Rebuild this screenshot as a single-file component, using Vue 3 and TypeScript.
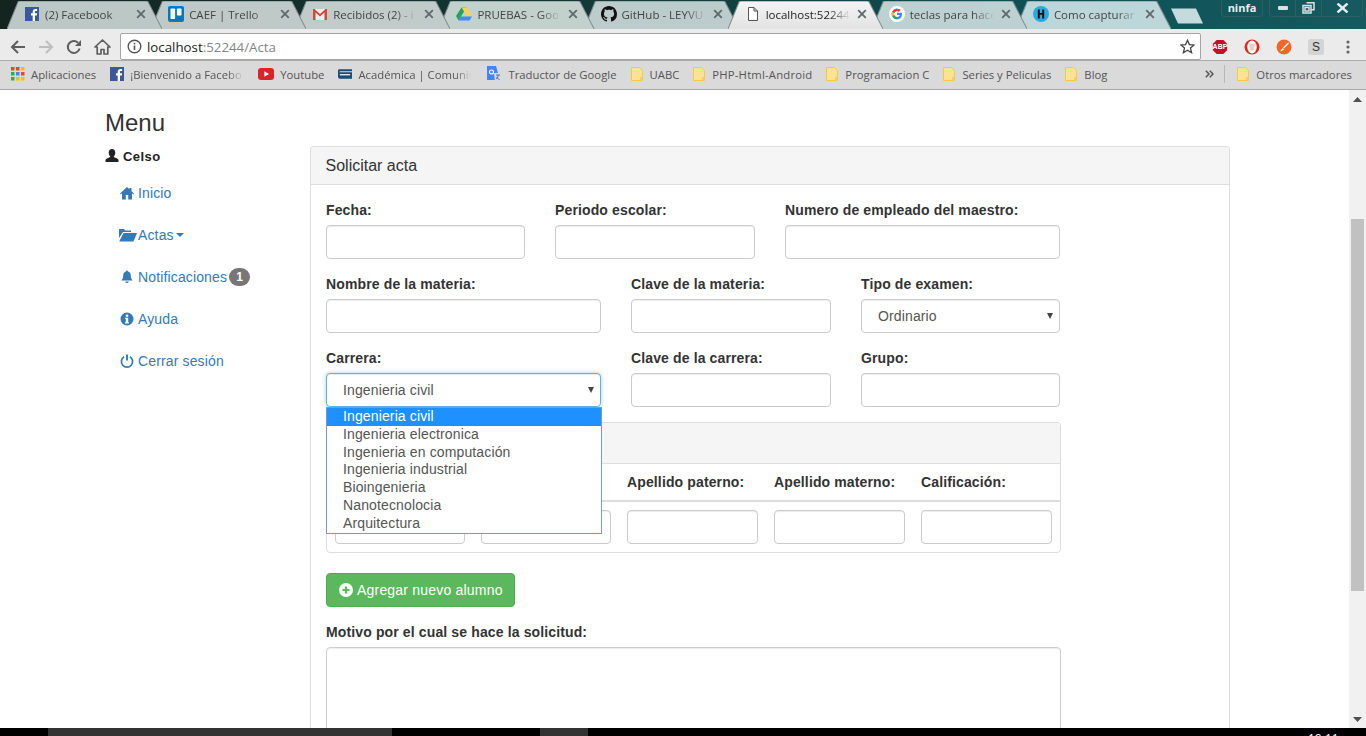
<script setup lang="ts">
interface Tab { title: string; icon: string; active?: boolean; fill: string }
const tabs: Tab[] = [
  { title: '(2) Facebook', icon: 'fb', fill: '#bcc8c6' },
  { title: 'CAEF | Trello', icon: 'trello', fill: '#bfcac8' },
  { title: 'Recibidos (2) - i', icon: 'gmail', fill: '#c1cbca' },
  { title: 'PRUEBAS - Goo', icon: 'drive', fill: '#c3d1cd' },
  { title: 'GitHub - LEYVU', icon: 'github', fill: '#bccbcb' },
  { title: 'localhost:52244', icon: 'doc', active: true, fill: 'url(#activeTab)' },
  { title: 'teclas para hace', icon: 'google', fill: '#bdd0d2' },
  { title: 'Como capturar', icon: 'hiren', fill: '#bdd6da' },
]
interface Mark { title: string; icon: string; fade?: boolean; wide?: boolean }
const marks: Mark[] = [
  { title: 'Aplicaciones', icon: 'apps' },
  { title: '¡Bienvenido a Facebo', icon: 'fb', fade: true },
  { title: 'Youtube', icon: 'yt' },
  { title: 'Académica | Comunid', icon: 'acad', fade: true },
  { title: 'Traductor de Google', icon: 'gt' },
  { title: 'UABC', icon: 'folder' },
  { title: 'PHP-Html-Android', icon: 'folder', wide: true },
  { title: 'Programacion C', icon: 'folder' },
  { title: 'Series y Peliculas', icon: 'folder' },
  { title: 'Blog', icon: 'folder' },
]
const nav = ['Inicio', 'Actas', 'Notificaciones', 'Ayuda', 'Cerrar sesión']
const carreras = ['Ingenieria civil', 'Ingenieria electronica', 'Ingenieria en computación', 'Ingenieria industrial', 'Bioingenieria', 'Nanotecnolocia', 'Arquitectura']
const cols = ['', '', 'Apellido paterno:', 'Apellido materno:', 'Calificación:']
</script>

<template>
  <div class="screen">
    <svg width="0" height="0" class="defs">
      <defs>
        <linearGradient id="activeTab" x1="0" y1="0" x2="0" y2="1">
          <stop offset="0" stop-color="#f4f4f4" />
          <stop offset="1" stop-color="#e3e3e3" />
        </linearGradient>
      </defs>
    </svg>

    <div class="tabstrip">
      <div class="tabs">
        <div v-for="(t, i) in tabs" :key="t.title" class="tab" :class="{ active: t.active }" :style="{ zIndex: t.active ? 20 : 10 - i }">
          <svg class="tab-bg" viewBox="0 0 155 28" preserveAspectRatio="none">
            <path d="M0 28 L11 1 Q11.5 0 13 0 L139 0 Q140.5 0 141 1 L155 28" :fill="t.fill" stroke="#7f8c8c" stroke-width="1" />
          </svg>
          <span class="fav">
            <svg v-if="t.icon === 'fb'" width="16" height="16" viewBox="0 0 16 16"><rect width="14" height="14" y="1" x="1" fill="#3b5998" /><path d="M11 15V9.5h1.800l.3-2.200H11V6c0-.6.2-1 1-1h1.100V3c-.2 0-.9-.1-1.600-.1-1.600 0-2.800 1-2.800 2.800v1.600H7v2.200h1.700V15z" fill="#fff" /></svg>
            <svg v-else-if="t.icon === 'trello'" width="16" height="16" viewBox="0 0 16 16"><rect width="16" height="16" rx="2" fill="#0079bf" /><rect x="2.500" y="2.500" width="4.600" height="10.500" rx=".8" fill="#fff" /><rect x="8.900" y="2.500" width="4.600" height="7" rx=".8" fill="#fff" /></svg>
            <svg v-else-if="t.icon === 'gmail'" width="16" height="16" viewBox="0 0 16 16"><path d="M1 3h14v11H1z" fill="#eee" /><path d="M1 14V3h1.500L8 8l5.500-5H15v11h-2.500V6.500L8 10.500 3.500 6.500V14z" fill="#d44638" /></svg>
            <svg v-else-if="t.icon === 'drive'" width="16" height="16" viewBox="0 0 16 16"><path d="M5.500 1.500h5L5 10.500 2.500 14.500 0 10z" fill="#1fa463" /><path d="M5.500 1.500h5L16 10h-5z" fill="#ffd04b" /><path d="M4.800 10.500H16l-2.500 4H2.500z" fill="#4688f4" /></svg>
            <svg v-else-if="t.icon === 'github'" width="16" height="16" viewBox="0 0 16 16"><path d="M8 0C3.580 0 0 3.580 0 8c0 3.540 2.290 6.530 5.470 7.590.4.070.55-.17.55-.38 0-.19-.01-.82-.01-1.490-2.010.37-2.530-.49-2.690-.94-.09-.23-.48-.94-.82-1.130-.28-.15-.68-.52-.01-.53.63-.01 1.080.58 1.230.82.720 1.210 1.870.870 2.330.660.070-.520.280-.870.510-1.070-1.780-.2-3.640-.890-3.640-3.950 0-.870.310-1.590.820-2.150-.080-.200-.360-1.020.080-2.120 0 0 .670-.210 2.200.820.640-.180 1.320-.270 2-.270s1.360.090 2 .270c1.530-1.040 2.200-.820 2.200-.820.440 1.100.160 1.920.080 2.120.510.560.820 1.270.820 2.150 0 3.070-1.870 3.750-3.650 3.950.290.250.540.730.540 1.480 0 1.070-.010 1.930-.010 2.200 0 .210.150.460.550.380A8.010 8.010 0 0 0 16 8c0-4.420-3.580-8-8-8z" fill="#111" /></svg>
            <svg v-else-if="t.icon === 'doc'" width="16" height="16" viewBox="0 0 16 16"><path d="M3.500 1.500h5.500l3.500 3.500v9.500h-9zM9 1.500V5h3.500" fill="#fff" stroke="#555" stroke-width="1" /></svg>
            <svg v-else-if="t.icon === 'google'" width="16" height="16" viewBox="0 0 16 16"><circle cx="8" cy="8" r="8" fill="#fff" /><path d="M12.800 6.800H8v2.200h2.800c-.3 1.300-1.400 2-2.800 2a3 3 0 1 1 1.900-5.300l1.600-1.600A5.300 5.300 0 1 0 8 13.300c2.900 0 5-2 5-5.100 0-.5 0-.9-.2-1.400z" fill="#4285f4" /><path d="M3.300 5.500 5.200 7A3 3 0 0 1 9.900 5.700l1.600-1.600a5.300 5.300 0 0 0-8.200 1.400z" fill="#ea4335" /><path d="M3.300 10.500 5.200 9A3 3 0 0 0 8 11v2.300a5.300 5.300 0 0 1-4.700-2.800z" fill="#34a853" /><path d="M2.800 8c0-.9.200-1.700.5-2.500L5.200 7a3 3 0 0 0 0 2l-1.900 1.500A5.300 5.300 0 0 1 2.800 8z" fill="#fbbc05" /></svg>
            <svg v-else-if="t.icon === 'hiren'" width="16" height="16" viewBox="0 0 16 16"><circle cx="8" cy="8" r="8" fill="#29abe2" /><path d="M4.800 3.500h2v3.500h2.400V3.500h2v9h-2V8.800H6.800v3.700h-2z" fill="#111" /></svg>
          </span>
          <span class="tab-title">{{ t.title }}</span>
          <svg class="tab-x" width="10" height="10" viewBox="0 0 10 10"><path d="M1.200 1.200 8.800 8.800M8.800 1.200 1.200 8.800" stroke="#5f6a6a" stroke-width="1.800" /></svg>
        </div>
        <svg class="newtab" width="33" height="16" viewBox="0 0 33 16"><path d="M0 .5h25L32 15.500H7z" fill="#c4dadd" /></svg>
      </div>
      <div class="winbtns">
        <div class="winbtn user">ninfa</div>
        <div class="winctl">
          <div class="w-min"><svg width="12" height="6" viewBox="0 0 12 6"><rect x="1" y="1" width="10" height="4" rx="1" fill="#d8e2e2" /></svg></div>
          <div class="w-max"><svg width="13" height="12" viewBox="0 0 13 12"><path d="M4.500 .8h7.500v7H9.500M1 3.500h8v7.500H1zM3 5.500h4V9H3z" fill="none" stroke="#d8e2e2" stroke-width="1.500" /></svg></div>
          <div class="w-close"><svg width="13" height="10" viewBox="0 0 13 10"><path d="M1.500 .5 11.500 9.500M11.500 .5 1.500 9.500" stroke="#e4ecec" stroke-width="2.400" /></svg></div>
        </div>
      </div>
    </div>

    <div class="toolbar">
      <div class="navbtns">
        <svg width="16" height="16" viewBox="0 0 16 16"><path d="M15 8H2.500M8 2 2 8l6 6" fill="none" stroke="#5e5e5e" stroke-width="2" /></svg>
        <svg width="16" height="16" viewBox="0 0 16 16"><path d="M1 8h12.500M8 2l6 6-6 6" fill="none" stroke="#bdbdbd" stroke-width="2" /></svg>
        <svg width="16" height="16" viewBox="0 0 16 16"><path d="M13.600 9.500A6 6 0 1 1 12 3.700" fill="none" stroke="#5e5e5e" stroke-width="2" /><path d="M15 1v6H9z" fill="#5e5e5e" /></svg>
        <svg width="17" height="16" viewBox="0 0 17 16"><path d="M8.500 1 1 8h2.200v7h3.800v-4.500h3V15h3.800V8H16z" fill="none" stroke="#5e5e5e" stroke-width="1.700" stroke-linejoin="round" /></svg>
      </div>
      <div class="omnibox">
        <svg width="15" height="15" viewBox="0 0 15 15"><circle cx="7.500" cy="7.500" r="6.300" fill="none" stroke="#555" stroke-width="1.400" /><rect x="6.700" y="6.500" width="1.600" height="4.500" fill="#555" /><rect x="6.700" y="3.800" width="1.600" height="1.600" fill="#555" /></svg>
        <span class="url"><span class="host">localhost</span>:52244/Acta</span>
        <svg class="star" width="15" height="15" viewBox="0 0 15 15"><path d="M7.500 1.300 9.400 5.600l4.700.4-3.600 3.100 1.100 4.600-4.100-2.500-4.100 2.500 1.100-4.600L.9 6l4.700-.4z" fill="none" stroke="#444" stroke-width="1.300" /></svg>
      </div>
      <div class="exts">
        <span class="abp">
          <svg width="16" height="16" viewBox="0 0 18 18"><path d="M5.300 1h7.400L17 5.300v7.400L12.700 17H5.300L1 12.700V5.300z" fill="#c70d2c" /></svg>
          <span class="abp-t">ABP</span>
        </span>
        <svg width="16" height="16" viewBox="0 0 17 17"><circle cx="8.500" cy="8.500" r="8" fill="#e02a20" /><ellipse cx="8.500" cy="8.500" rx="5" ry="6.800" fill="#fff" /><path d="M5.700 8V5h5.500v4l-1.200 3.500H7z" fill="#e02a20" opacity=".25" /></svg>
        <svg width="16" height="16" viewBox="0 0 16 16"><circle cx="8" cy="8" r="7.500" fill="#f4652a" /><path d="M12 3.500 7 8.500l1 1 5-5zM6.500 9 4 12.500l3.500-1.500 .5-.8z" fill="#fff" /></svg>
        <span class="ext-s">S</span>
        <svg class="dots" width="4" height="14" viewBox="0 0 4 14"><circle cx="2" cy="2" r="1.600" fill="#666" /><circle cx="2" cy="7" r="1.600" fill="#666" /><circle cx="2" cy="12" r="1.600" fill="#666" /></svg>
      </div>
    </div>

    <div class="bookmarks">
      <div class="marks">
        <div v-for="m in marks" :key="m.title" class="mark" :class="{ isfolder: m.icon === 'folder' }">
          <svg v-if="m.icon === 'apps'" width="14" height="14" viewBox="0 0 14 14">
            <rect x="0" y="0" width="3.500" height="3.500" fill="#ea4335" /><rect x="5" y="0" width="3.500" height="3.500" fill="#ea4335" /><rect x="10" y="0" width="3.500" height="3.500" fill="#fbbc05" />
            <rect x="0" y="5" width="3.500" height="3.500" fill="#34a853" /><rect x="5" y="5" width="3.500" height="3.500" fill="#4285f4" /><rect x="10" y="5" width="3.500" height="3.500" fill="#ea4335" />
            <rect x="0" y="10" width="3.500" height="3.500" fill="#34a853" /><rect x="5" y="10" width="3.500" height="3.500" fill="#fbbc05" /><rect x="10" y="10" width="3.500" height="3.500" fill="#fbbc05" />
          </svg>
          <svg v-else-if="m.icon === 'fb'" width="14" height="14" viewBox="0 0 14 14"><rect width="14" height="14" fill="#3b5998" /><path d="M10 14V8.500h1.800l.3-2.200H10V5c0-.6.2-1 1-1h1.100V2c-.2 0-.9-.1-1.600-.1-1.600 0-2.800 1-2.800 2.800v1.600H6v2.200h1.700V14z" fill="#fff" /></svg>
          <svg v-else-if="m.icon === 'yt'" width="16" height="12" viewBox="0 0 16 12"><rect width="16" height="12" rx="3" fill="#d9252a" /><path d="M6.300 3.200 11 6l-4.700 2.800z" fill="#fff" /></svg>
          <svg v-else-if="m.icon === 'acad'" width="14" height="10" viewBox="0 0 15 10"><path d="M1 0h14v2H3C2 2 1.500 2.500 1.500 3H15v7H2C.5 10 0 9 0 7.500V2C0 1 .3 0 1 0z" fill="#1c4b74" /><rect x="2" y="5" width="11" height="1.500" fill="#dfe6ec" /></svg>
          <svg v-else-if="m.icon === 'gt'" width="16" height="16" viewBox="0 0 16 16"><path d="M1 0h9l4 14H1z" fill="#4285f4" /><path d="M8 7h8v9H9z" fill="#d5d9e3" /><path d="M10 9h4M12 9v1c0 1.500-1 2.500-2 3M10.500 11c.5 1 1.500 2 3 2.500" stroke="#5b6d94" fill="none" /><circle cx="5.500" cy="6" r="2" fill="none" stroke="#fff" stroke-width="1.200" /></svg>
          <svg v-else width="12" height="14" viewBox="0 0 12 14"><path d="M.5.500h8l3 3v10H.5z" fill="#fde293" stroke="#f0c94f" /><path d="M9 10h2.500v3.500H9z" fill="#f4d064" /></svg>
          <span class="mark-t" :class="{ fade: m.fade, wide: m.wide }">{{ m.title }}</span>
        </div>
      </div>
      <div class="bm-right">
        <svg width="9" height="8" viewBox="0 0 9 8"><path d="M.8.800 4 4 .8 7.200M4.800.800 8 4 4.800 7.200" fill="none" stroke="#555" stroke-width="1.500" /></svg>
        <span class="bm-sep"></span>
        <div class="mark isfolder">
          <svg width="12" height="14" viewBox="0 0 12 14"><path d="M.5.500h8l3 3v10H.5z" fill="#fde293" stroke="#f0c94f" /><path d="M9 10h2.500v3.500H9z" fill="#f4d064" /></svg>
          <span class="mark-t">Otros marcadores</span>
        </div>
      </div>
    </div>

    <div class="viewport">
      <main class="page">
        <div class="container">
          <aside class="sidebar">
            <h3 class="menu-title">Menu</h3>
            <div class="user-row">
              <svg width="14" height="14" viewBox="0 0 14 14"><path d="M7 0c2 0 3.300 1.500 3.300 3.700 0 1.500-.6 2.800-1.500 3.600 0 .7.300 1 1 1.300 1.500.6 3.200 1.200 3.700 2.400V13H.5v-2c.5-1.200 2.200-1.800 3.700-2.400.7-.3 1-.6 1-1.300C4.300 6.500 3.700 5.200 3.700 3.700 3.700 1.500 5 0 7 0z" fill="#222" /></svg>
              <b>Celso</b>
            </div>
            <nav class="nav">
              <a v-for="(n, i) in nav" :key="n" class="nav-item">
                <svg v-if="i === 0" width="14" height="14" viewBox="0 0 14 14"><path d="M7 1 0 7.500l.8.800L2 7.300V13.500h3.800V9h2.400v4.500H12V7.300l1.200 1 .8-.8L11.500 5.200V2h-2v1.300z" fill="#337ab7" /></svg>
                <svg v-else-if="i === 1" width="18" height="14" viewBox="0 0 18 14" class="ic-folder"><path d="M0 3V1h5l1 1.500h6V4H4L0 10z" fill="#337ab7" /><path d="M4.500 5H18L14.500 13.500H.2z" fill="#337ab7" /></svg>
                <svg v-else-if="i === 2" width="14" height="14" viewBox="0 0 14 14"><path d="M6 1.500a1 1 0 0 1 2 0c2 .5 2.700 2 2.800 4 .1 2.500.7 3.800 1.900 5H1.300c1.200-1.200 1.800-2.500 1.900-5 .1-2 .8-3.500 2.800-4zM5.400 11.500h3.200a1.600 1.600 0 0 1-3.200 0z" fill="#337ab7" /></svg>
                <svg v-else-if="i === 3" width="14" height="14" viewBox="0 0 14 14"><circle cx="7" cy="7" r="6.500" fill="#337ab7" /><rect x="5.800" y="2.600" width="2.400" height="2.200" fill="#fff" /><path d="M5.200 5.800h3v4.400h.8v1.200H5v-1.200h.8V7H5.200z" fill="#fff" /></svg>
                <svg v-else width="14" height="14" viewBox="0 0 14 14"><path d="M4 2.800a5.600 5.600 0 1 0 6 0" fill="none" stroke="#337ab7" stroke-width="1.700" /><path d="M7 .5v6" stroke="#337ab7" stroke-width="1.900" /></svg>
                <span class="nav-t" :class="{ tight: i === 1 }">{{ n }}</span>
                <span v-if="i === 1" class="caret"></span>
                <span v-if="i === 2" class="badge">1</span>
              </a>
            </nav>
          </aside>

          <section class="panel">
            <header class="panel-head">Solicitar acta</header>
            <div class="panel-body">
              <div class="grid g1">
                <div class="field"><label>Fecha:</label><input class="ctl" /></div>
                <div class="field"><label>Periodo escolar:</label><input class="ctl" /></div>
                <div class="field"><label>Numero de empleado del maestro:</label><input class="ctl" /></div>
              </div>
              <div class="grid g2">
                <div class="field"><label>Nombre de la materia:</label><input class="ctl" /></div>
                <div class="field"><label>Clave de la materia:</label><input class="ctl" /></div>
                <div class="field">
                  <label>Tipo de examen:</label>
                  <div class="ctl sel"><span>Ordinario</span><i class="sel-arrow"></i></div>
                </div>
              </div>
              <div class="grid g2">
                <div class="field drop-host">
                  <label>Carrera:</label>
                  <div class="ctl sel focus"><span>Ingenieria civil</span><i class="sel-arrow"></i></div>
                  <ul class="dropdown">
                    <li v-for="(c, i) in carreras" :key="c" :class="{ on: i === 0 }">{{ c }}</li>
                  </ul>
                </div>
                <div class="field"><label>Clave de la carrera:</label><input class="ctl" /></div>
                <div class="field"><label>Grupo:</label><input class="ctl" /></div>
              </div>

              <div class="students">
                <div class="students-head"></div>
                <div class="st-row st-labels">
                  <b v-for="(c, i) in cols" :key="i">{{ c }}</b>
                </div>
                <div class="st-row st-inputs">
                  <input v-for="(c, i) in cols" :key="i" class="ctl" />
                </div>
              </div>

              <button class="btn-add" type="button">
                <svg width="14" height="14" viewBox="0 0 14 14"><circle cx="7" cy="7" r="7" fill="#fff" /><path d="M7 3.500v7M3.500 7h7" stroke="#5cb85c" stroke-width="2.200" /></svg>
                <span>Agregar nuevo alumno</span>
              </button>

              <div class="field motivo">
                <label>Motivo por el cual se hace la solicitud:</label>
                <textarea class="ctl area"></textarea>
              </div>
            </div>
          </section>
        </div>
      </main>
      <div class="scrollbar">
        <svg width="9" height="5" viewBox="0 0 9 5"><path d="M4.500 0 9 5H0z" fill="#505050" /></svg>
        <div class="thumb"></div>
        <svg class="arrow-down" width="9" height="5" viewBox="0 0 9 5"><path d="M0 0h9L4.500 5z" fill="#505050" /></svg>
      </div>
    </div>

    <div class="taskbar">
      <span class="task t1"></span>
      <span class="task t2"></span>
      <span class="clock">19:11</span>
      <span class="tray-line"></span>
    </div>
  </div>
</template>

<style scoped>
.screen {
  width: 1366px;
  height: 736px;
  overflow: hidden;
  display: flex;
  flex-direction: column;
  font-family: "Liberation Sans", Arial, sans-serif;
  font-size: 14px;
  color: #333;
  background: #fff;
}
.defs { position: absolute; }

.tabstrip {
  height: 29px;
  flex: none;
  display: flex;
  justify-content: space-between;
  background: linear-gradient(90deg, #14241f 0%, #123a38 45%, #0f5055 75%, #155a5e 100%);
  padding-left: 7px;
  padding-right: 3px;
}
.tabs { display: flex; padding-top: 1px; }
.tab {
  position: relative;
  width: 155.140px;
  height: 28px;
  margin-right: -11px;
  display: flex;
  align-items: center;
  padding-left: 17px;
  padding-right: 16px;
  padding-bottom: 2px;
  font-family: "Open Sans", "Noto Sans", sans-serif;
  font-size: 11.500px;
  color: #444;
  box-sizing: border-box;
  flex: none;
}
.tab.active { color: #222; }
.tab-bg { position: absolute; inset: 0; width: 100%; height: 100%; }
.fav, .tab-title, .tab-x { position: relative; }
.fav { width: 16px; height: 16px; display: flex; flex: none; }
.tab-title {
  margin-left: 5px;
  width: 84px;
  white-space: nowrap;
  overflow: hidden;
  flex: none;
  -webkit-mask-image: linear-gradient(90deg, #000 75%, transparent 100%);
  mask-image: linear-gradient(90deg, #000 75%, transparent 100%);
}
.tab-x { margin-left: 7px; flex: none; }
.newtab { margin-left: 11px; margin-top: 7px; flex: none; }

.winbtns { display: flex; gap: 6px; align-items: flex-start; }
.winbtn.user {
  width: 42px;
  height: 17px;
  box-sizing: border-box;
  border: 1px solid #2f5f62;
  border-top: 0;
  border-radius: 0 0 4px 4px;
  color: #e6eeee;
  font-family: "Open Sans", sans-serif;
  font-size: 11px;
  font-weight: 700;
  text-align: center;
  line-height: 16px;
}
.winctl {
  display: flex;
  height: 17px;
  border: 1px solid #2f5f62;
  border-top: 0;
  border-radius: 0 0 4px 4px;
  box-sizing: border-box;
}
.winctl > div { display: flex; align-items: center; justify-content: center; }
.w-min { width: 25px; border-right: 1px solid #2f5f62; }
.w-max { width: 25px; border-right: 1px solid #2f5f62; }
.w-close { width: 40px; }

.toolbar {
  height: 32px;
  flex: none;
  box-sizing: border-box;
  display: flex;
  align-items: flex-start;
  background: #ebebeb;
  border-bottom: 1px solid #ababab;
  padding-top: 4px;
  padding-left: 10px;
}
.navbtns { display: flex; gap: 12px; align-items: center; height: 27px; width: 110px; flex: none; }
.omnibox {
  width: 1081px;
  height: 27px;
  box-sizing: border-box;
  flex: none;
  background: #fff;
  border: 1px solid #a4a4a4;
  border-radius: 2px;
  display: flex;
  align-items: center;
  padding-left: 6px;
  padding-right: 5px;
  font-family: "Open Sans", "Noto Sans", sans-serif;
  font-size: 13.300px;
  color: #80868b;
}
.url { margin-left: 5px; flex: 1; padding-top: 1px; }
.host { color: #222; }
.exts {
  flex: 1;
  display: flex;
  align-items: center;
  height: 27px;
  padding-left: 11px;
  gap: 16px;
}
.abp { position: relative; width: 16px; height: 16px; display: flex; }
.abp-t {
  position: absolute;
  inset: 0;
  color: #fff;
  font: 700 7px/16px "Liberation Sans", sans-serif;
  text-align: center;
}
.ext-s {
  width: 16px;
  height: 16px;
  background: #d4d4d4;
  border-radius: 3px;
  text-align: center;
  font: 12px/16px "Liberation Sans", sans-serif;
  color: #333;
}
.dots { margin-left: 6px; }

.bookmarks {
  height: 29px;
  flex: none;
  box-sizing: border-box;
  display: flex;
  justify-content: space-between;
  align-items: center;
  background: #dadada;
  border-bottom: 1px solid #a9a9a9;
  padding: 0 14px 2px 11px;
  font-family: "Open Sans", "Noto Sans", sans-serif;
  font-size: 11.300px;
  color: #555;
}
.marks { display: flex; align-items: center; gap: 14px; }
.mark { display: flex; align-items: center; gap: 6px; white-space: nowrap; }
.mark.isfolder { gap: 7px; }
.mark-t.wide { letter-spacing: .19px; }
.mark-t.fade {
  width: 114px;
  overflow: hidden;
  -webkit-mask-image: linear-gradient(90deg, #000 85%, transparent 100%);
  mask-image: linear-gradient(90deg, #000 85%, transparent 100%);
}
.bm-right { display: flex; align-items: center; }
.bm-sep { width: 1px; height: 18px; background: #b8b8b8; margin: 0 12px 0 10px; }

.viewport { flex: 1; min-height: 0; display: flex; }
.page { flex: 1; min-width: 0; overflow: hidden; }
.container { display: flex; padding-left: 105px; }
.sidebar { width: 205px; flex: none; }
.menu-title {
  margin: 20px 0 10px;
  font-size: 24px;
  line-height: 26.400px;
  font-weight: 500;
  color: #333;
}
.user-row { display: flex; align-items: center; gap: 4px; height: 20px; color: #222; font-size: 13px; letter-spacing: .45px; }
.nav { display: flex; flex-direction: column; margin-top: 7px; }
.nav-item {
  display: flex;
  align-items: center;
  padding: 10px 15px;
  height: 40px;
  box-sizing: border-box;
  margin-bottom: 2px;
  color: #337ab7;
  line-height: 20px;
  letter-spacing: .14px;
}
.nav-t { margin-left: 4px; }
.ic-folder { margin-left: -1px; margin-right: -3px; }
.caret {
  width: 0;
  height: 0;
  margin-left: 2px;
  border-top: 4px solid #337ab7;
  border-left: 4px solid transparent;
  border-right: 4px solid transparent;
}
.badge {
  margin-left: 2px;
  min-width: 7px;
  padding: 3px 7px;
  background: #777;
  color: #fff;
  font-size: 12px;
  font-weight: 700;
  line-height: 12px;
  border-radius: 10px;
}

.panel {
  width: 920px;
  flex: none;
  margin-top: 56px;
  box-sizing: border-box;
  border: 1px solid #ddd;
  border-radius: 4px 4px 0 0;
  border-bottom: 0;
}
.panel-head {
  height: 38px;
  box-sizing: border-box;
  padding: 10px 15px 10px 14.500px;
  background: #f5f5f5;
  border-bottom: 1px solid #ddd;
  font-size: 16px;
  line-height: 18px;
  border-radius: 3px 3px 0 0;
}
.panel-body { padding: 15px; letter-spacing: .13px; }
.grid { display: grid; column-gap: 30px; margin-bottom: 15px; width: 734px; }
.g1 { grid-template-columns: 199px 200px 275px; }
.g2 { grid-template-columns: 275px 200px 199px; }
.field { display: flex; flex-direction: column; }
.field label { font-weight: 700; line-height: 20px; margin-bottom: 5px; }
.ctl {
  display: block;
  width: 100%;
  height: 34px;
  box-sizing: border-box;
  background: #fff;
  border: 1px solid #ccc;
  border-radius: 4px;
  box-shadow: inset 0 1px 1px rgba(0, 0, 0, .075);
  padding: 6px 12px;
  font: 14px/20px "Liberation Sans", Arial, sans-serif;
  color: #555;
}
.sel {
  display: flex;
  align-items: center;
  justify-content: space-between;
  padding-left: 16px;
  padding-right: 6px;
}
.sel-arrow {
  width: 0;
  height: 0;
  border-top: 6px solid #444;
  border-left: 3px solid transparent;
  border-right: 3px solid transparent;
}
.sel.focus {
  border-color: #66afe9;
  box-shadow: inset 0 1px 1px rgba(0, 0, 0, .075), 0 0 4px rgba(102, 175, 233, .6);
}
.drop-host { position: relative; }
.dropdown {
  position: absolute;
  left: 0;
  top: 59px;
  width: 276px;
  margin: 0;
  padding: 0;
  list-style: none;
  box-sizing: border-box;
  background: #fff;
  border: 1px solid #7a9ad6;
  z-index: 5;
  color: #555;
}
.dropdown li { height: 17.840px; line-height: 17.840px; padding-left: 16px; }
.dropdown li.on { background: #1e90ff; color: #fff; }

.students {
  width: 735px;
  box-sizing: border-box;
  border: 1px solid #ddd;
  border-radius: 4px;
  margin-bottom: 20px;
}
.students-head { height: 40px; background: #f5f5f5; border-bottom: 1px solid #ddd; border-radius: 3px 3px 0 0; }
.st-row {
  display: grid;
  grid-template-columns: 130px 130px 131px 131px 131px;
  column-gap: 16px;
  padding: 8px;
}
.st-labels { line-height: 20px; border-bottom: 2px solid #ddd; min-height: 38px; box-sizing: border-box; }
.btn-add {
  display: flex;
  align-items: center;
  justify-content: flex-start;
  gap: 4px;
  width: 189px;
  height: 34px;
  box-sizing: border-box;
  padding: 6px 12px;
  background: #5cb85c;
  border: 1px solid #4cae4c;
  border-radius: 4px;
  color: #fff;
  font: 14px/20px "Liberation Sans", Arial, sans-serif;
  letter-spacing: .2px;
  white-space: nowrap;
}
.btn-add svg { flex: none; }
.motivo { margin-top: 15px; }
.area { width: 735px; height: 150px; resize: none; }

.scrollbar {
  width: 17px;
  flex: none;
  background: #f1f1f1;
  display: flex;
  flex-direction: column;
  align-items: center;
  padding-top: 7px;
  padding-bottom: 6px;
  box-sizing: border-box;
}
.thumb { width: 13px; height: 372px; background: #c1c1c1; margin-top: 117px; flex: none; }
.arrow-down { margin-top: auto; }

.taskbar {
  height: 8px;
  flex: none;
  background: #000;
  display: flex;
  overflow: hidden;
  position: relative;
}
.task { height: 8px; background: #333; flex: none; }
.t1 { margin-left: 48px; width: 344px; }
.t2 { margin-left: 148px; width: 48px; }
.clock {
  margin-left: 720px;
  margin-top: 4px;
  color: #fff;
  font: 12px/14px "Open Sans", sans-serif;
}
.tray-line { width: 1px; height: 8px; background: #555; margin-left: 27px; flex: none; }
</style>
